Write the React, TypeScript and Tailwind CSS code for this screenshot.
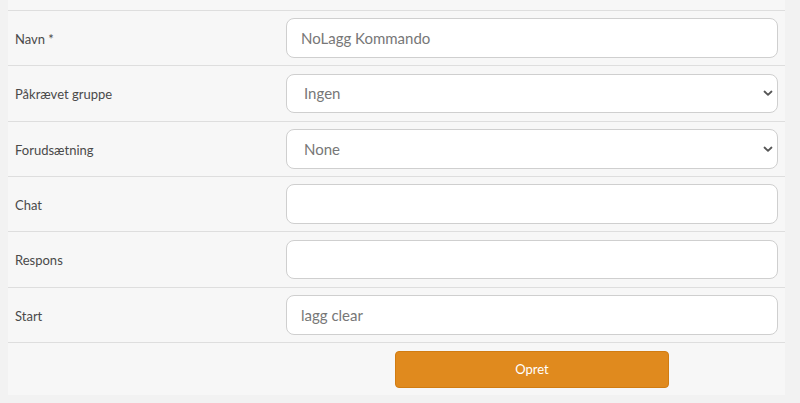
import React from "react";

const font = { fontFamily: "Lato, 'Open Sans', sans-serif" };

function Chevron() {
  return (
    <svg
      className="pointer-events-none absolute right-[5px] top-1/2 -translate-y-1/2"
      width="10"
      height="8"
      viewBox="0 0 10 8"
      fill="none"
    >
      <path d="M1.5 2.5 L5 5.8 L8.5 2.5" stroke="#555" strokeWidth="1.8" strokeLinecap="round" strokeLinejoin="round" />
    </svg>
  );
}

function Row({ label, children }: { label: string; children: React.ReactNode }) {
  return (
    <div className="flex h-[55.33px] items-center border-t border-[#dedede]">
      <div className="w-[278px] shrink-0 pl-[7px] pt-[3px] text-[13px] text-[#4a4a4a]">{label}</div>
      <div className="flex-1 pr-[7px]">{children}</div>
    </div>
  );
}

function TextInput({ value }: { value?: string }) {
  return (
    <input
      readOnly
      value={value ?? ""}
      className="block h-[39.5px] w-full rounded-[8px] border border-[#cfcfcf] bg-white px-[14px] text-[15px] text-[#777] outline-none"
      style={font}
    />
  );
}

function Select({ value }: { value: string }) {
  return (
    <div className="relative">
      <select
        className="block h-[39.5px] w-full appearance-none rounded-[8px] border border-[#cfcfcf] bg-white pl-[17px] text-[15px] text-[#777] outline-none"
        style={font}
        defaultValue={value}
      >
        <option value={value}>{value}</option>
      </select>
      <Chevron />
    </div>
  );
}

export default function App() {
  return (
    <div className="h-[403px] w-[800px] bg-[#f2f2f2] pl-[8px] pr-[15px]" style={font}>
      <div className="h-[395px] bg-[#f7f7f7] pt-[10px]">
        <Row label="Navn *">
          <TextInput value="NoLagg Kommando" />
        </Row>
        <Row label="Påkrævet gruppe">
          <Select value="Ingen" />
        </Row>
        <Row label="Forudsætning">
          <Select value="None" />
        </Row>
        <Row label="Chat">
          <TextInput />
        </Row>
        <Row label="Respons">
          <TextInput />
        </Row>
        <Row label="Start">
          <TextInput value="lagg clear" />
        </Row>
        <div className="flex border-t border-[#dedede] pt-[8px]">
          <div className="w-[278px] shrink-0" />
          <div className="flex flex-1 justify-center pr-[7px]">
            <button
              className="h-[37px] w-[274px] rounded-[4px] border border-[#d17c12] bg-[#e08a1e] text-[13px] text-white"
              style={font}
            >
              Opret
            </button>
          </div>
        </div>
      </div>
    </div>
  );
}
